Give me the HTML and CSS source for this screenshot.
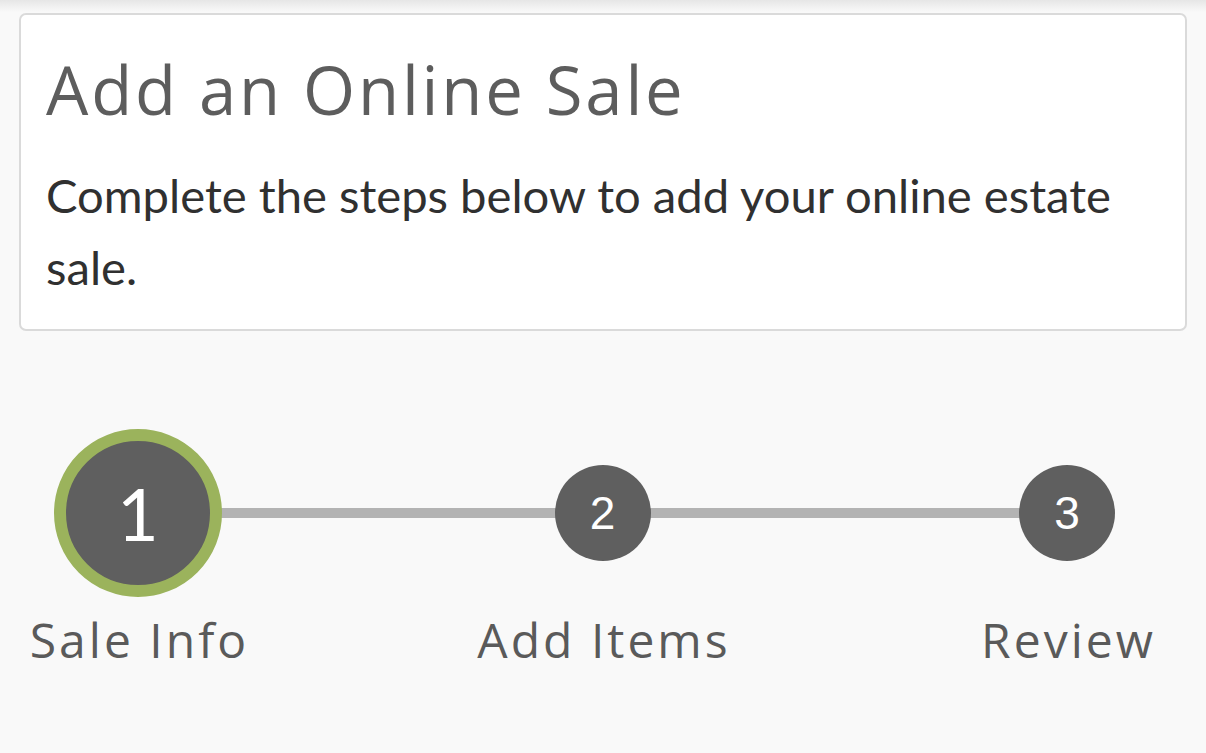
FILE: index.html
```html
<!DOCTYPE html>
<html lang="en">
<head>
<meta charset="utf-8">
<title>Add an Online Sale</title>
<link rel="stylesheet" href="styles.css">
</head>
<body>
<div class="page">
  <div class="topshade"></div>
  <section class="card">
    <h1 class="title">Add an Online Sale</h1>
    <p class="lead">Complete the steps below to add your online estate sale.</p>
  </section>
  <ol class="stepper">
    <li class="step step-active">
      <div class="dot-wrap"><span class="dot">1</span></div>
      <span class="label">Sale Info</span>
    </li>
    <li class="step">
      <div class="dot-wrap"><span class="dot">2</span></div>
      <span class="label">Add Items</span>
    </li>
    <li class="step">
      <div class="dot-wrap"><span class="dot">3</span></div>
      <span class="label">Review</span>
    </li>
  </ol>
</div>
</body>
</html>
```

FILE: styles.css
```css
html, body {
  margin: 0;
  padding: 0;
  background: #f9f9f9;
}
body {
  width: 1206px;
  height: 753px;
  overflow: hidden;
}
.page {
  position: relative;
  padding: 13px 19px 0 19px;
}
.topshade {
  position: absolute;
  left: 0;
  right: 0;
  top: 0;
  height: 12px;
  background: linear-gradient(#e6e6e6, #f9f9f9);
}
.card {
  position: relative;
  background: #fff;
  border: 2px solid #dadada;
  border-radius: 7px;
  padding: 34px 26px 26px 25px;
  height: 318px;
  box-sizing: border-box;
}
.title {
  margin: 0;
  font-family: "Open Sans", "Noto Sans", sans-serif;
  font-weight: 400;
  font-size: 67px;
  line-height: 80px;
  color: #5d5d5d;
  letter-spacing: 2.8px;
}
.lead {
  margin: 30px 0 0 0;
  font-family: Lato, "Liberation Sans", sans-serif;
  font-size: 47.2px;
  line-height: 72px;
  color: #303030;
}
.stepper {
  list-style: none;
  margin: 98px 0 0 -1px;
  padding: 0;
  display: flex;
  justify-content: space-between;
  position: relative;
}
.stepper::before {
  content: "";
  position: absolute;
  left: 120px;
  right: 120px;
  top: 79px;
  height: 10px;
  background: #b3b3b3;
}
.step {
  width: 240px;
  display: flex;
  flex-direction: column;
  align-items: center;
  position: relative;
}
.dot-wrap {
  height: 168px;
  display: flex;
  align-items: center;
  justify-content: center;
}
.dot {
  width: 96px;
  height: 96px;
  border-radius: 50%;
  background: #5f5f5f;
  color: #fff;
  display: flex;
  align-items: center;
  justify-content: center;
  font-family: "Liberation Sans", Arial, sans-serif;
  font-size: 46px;
  line-height: 1;
}
.step-active .dot {
  width: 144px;
  height: 144px;
  border: 12px solid #9bb35c;
  font-family: Lato, sans-serif;
  font-size: 72px;
}
.label {
  margin-top: 15px;
  padding-left: 3px;
  font-family: "Open Sans", "Noto Sans", sans-serif;
  font-size: 48px;
  line-height: 55px;
  color: #5a5a5a;
  letter-spacing: 3px;
  white-space: nowrap;
}
```
